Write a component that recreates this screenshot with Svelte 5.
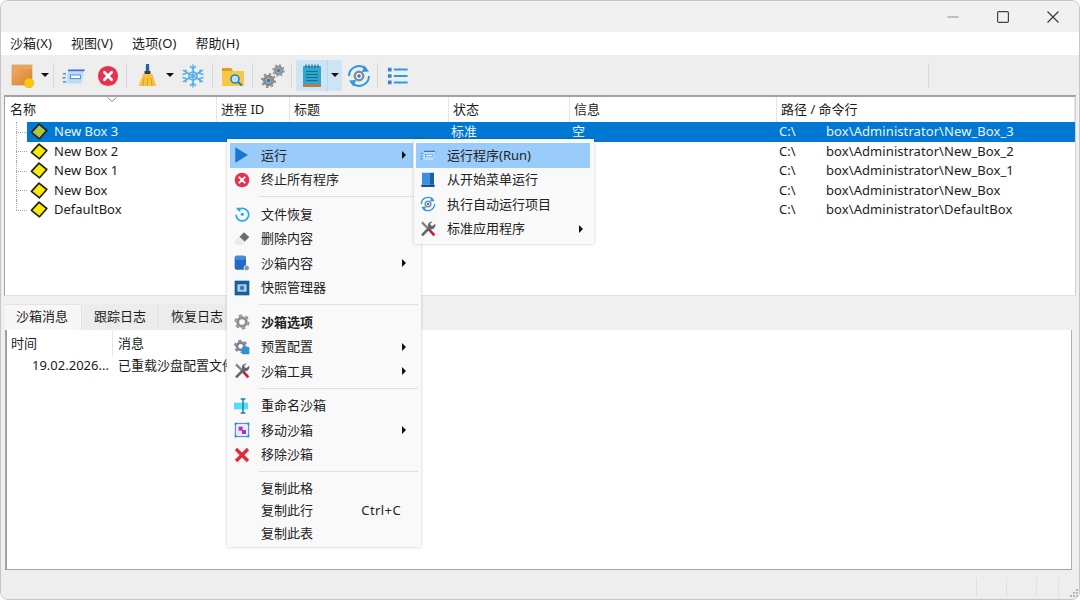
<script lang="ts">
  const menus = ['沙箱(X)', '视图(V)', '选项(O)', '帮助(H)'];
  const columns = ['名称', '进程 ID', '标题', '状态', '信息', '路径 / 命令行'];
  const boxes = [
    { name: 'New Box 3', state: '标准', info: '空', path: 'box\\Administrator\\New_Box_3', active: true },
    { name: 'New Box 2', state: '', info: '', path: 'box\\Administrator\\New_Box_2', active: false },
    { name: 'New Box 1', state: '', info: '', path: 'box\\Administrator\\New_Box_1', active: false },
    { name: 'New Box', state: '', info: '', path: 'box\\Administrator\\New_Box', active: false },
    { name: 'DefaultBox', state: '', info: '', path: 'box\\Administrator\\DefaultBox', active: false }
  ];
  const tabs = ['沙箱消息', '跟踪日志', '恢复日志'];
  type Item = { label?: string; icon?: string; sub?: boolean; on?: boolean; bold?: boolean; key?: string; sep?: boolean; small?: boolean };
  const mainMenu: Item[] = [
    { label: '运行', icon: 'play', sub: true, on: true },
    { label: '终止所有程序', icon: 'stop' },
    { sep: true },
    { label: '文件恢复', icon: 'restore' },
    { label: '删除内容', icon: 'eraser' },
    { label: '沙箱内容', icon: 'content', sub: true },
    { label: '快照管理器', icon: 'snapshot' },
    { sep: true },
    { label: '沙箱选项', icon: 'gear', bold: true },
    { label: '预置配置', icon: 'preset', sub: true },
    { label: '沙箱工具', icon: 'tools', sub: true },
    { sep: true },
    { label: '重命名沙箱', icon: 'rename' },
    { label: '移动沙箱', icon: 'move', sub: true },
    { label: '移除沙箱', icon: 'remove' },
    { sep: true },
    { label: '复制此格', small: true },
    { label: '复制此行', key: 'Ctrl+C', small: true },
    { label: '复制此表', small: true }
  ];
  const runMenu: Item[] = [
    { label: '运行程序(Run)', icon: 'run', on: true },
    { label: '从开始菜单运行', icon: 'book' },
    { label: '执行自动运行项目', icon: 'auto' },
    { label: '标准应用程序', icon: 'tools', sub: true }
  ];
</script>

{#snippet icon(name: string, size: number)}
  <svg class="ico" width={size} height={size} viewBox="0 0 24 24" aria-hidden="true">
    {#if name === 'box'}
      <rect x="1" y="1" width="20" height="20" fill="url(#orange)" stroke="#d08a3c" stroke-width=".6" />
      <rect x="1" y="1" width="20" height="4" fill="#e9a45c" />
      <circle cx="18" cy="19" r="4.8" fill="#fdc80c" stroke="#eea806" stroke-width=".6" />
    {:else if name === 'run'}
      <path d="M6 5.5h17l-1 2H6z" fill="#3f6fc4" />
      <path d="M6 7.500h16l-2.400 12H4.500z" fill="#bcdcf8" />
      <rect x="8.400" y="11" width="10" height="3.600" fill="#fff" stroke="#3a94e0" stroke-width="1" />
      <path d="M1 9h3v1.600H1zM.5 13h3v1.600h-3zM1 17h3v1.600H1z" fill="#3a94e0" />
    {:else if name === 'stop'}
      <circle cx="12" cy="12" r="11" fill="#e8314f" />
      <path d="M8 8l8 8M16 8l-8 8" stroke="#fff" stroke-width="3" stroke-linecap="round" />
    {:else if name === 'broom'}
      <path d="M11 0h3l.3 8h-3.600z" fill="#1f5fb0" />
      <rect x="9.500" y="7" width="6" height="3" fill="#3a3f4a" />
      <path d="M8 10h9.600l3.600 12H3.600z" fill="#f7c341" />
      <path d="M8 22l1-8M12.500 22v-8M17 22l-1-8" stroke="#d89a20" stroke-width=".9" />
    {:else if name === 'snow'}
      <g stroke="#55aeea" stroke-width="1.500" fill="none">
        <path d="M12 .5v23M2 6.200l20 11.600M22 6.200L2 17.800" />
        <path d="M9 2l3 3 3-3M9 22l3-3 3 3M1.500 10.500l4-1-1-4M22.500 13.500l-4 1 1 4M22.500 10.500l-4-1 1-4M1.500 13.500l4 1-1 4" />
        <path d="M12 7.500l4 2.200v4.600L12 16.500l-4-2.200V9.700z" />
      </g>
    {:else if name === 'folder'}
      <path d="M1 4h9l2 3h11v15H1z" fill="#f8c93f" />
      <path d="M1 4h9l2 3H1z" fill="#d99f1d" />
      <circle cx="14" cy="15" r="4" fill="#bfe2fb" stroke="#1d86d6" stroke-width="1.600" />
      <path d="M17 18l4 3.500" stroke="#1d86d6" stroke-width="2.200" />
    {:else if name === 'gears'}
      <circle cx="7.500" cy="16.500" r="4" fill="#fff" stroke="#8b8b8b" stroke-width="3.400" />
      <circle cx="7.500" cy="16.500" r="2" fill="#2b78c8" />
      <circle cx="7.500" cy="16.500" r="6.600" fill="none" stroke="#8b8b8b" stroke-width="1.800" stroke-dasharray="2.400 2.800" />
      <circle cx="17.500" cy="6.500" r="3.400" fill="#fff" stroke="#959595" stroke-width="3" />
      <circle cx="17.500" cy="6.500" r="1.700" fill="#2b78c8" />
      <circle cx="17.500" cy="6.500" r="5.500" fill="none" stroke="#959595" stroke-width="1.500" stroke-dasharray="2 2.300" />
    {:else if name === 'notebook'}
      <rect x="3" y="2" width="18" height="21" rx="1" fill="#2fa6cc" />
      <rect x="3" y="20" width="18" height="3" fill="#b9794f" />
      <path d="M6 7.500h12M6 10.500h12M6 13.500h12M6 16.500h12" stroke="#1a6d88" stroke-width="1.200" />
      <path d="M6 .5v3M9 .5v3M12 .5v3M15 .5v3M18 .5v3" stroke="#1d5f8a" stroke-width="1.200" />
    {:else if name === 'auto'}
      <path d="M2 12a10 10 0 0 1 17-7M22 12a10 10 0 0 1-17 7" fill="none" stroke="#2e98e2" stroke-width="2" />
      <path d="M17.500 1.500l4.500 6-7.200.6zM6.500 22.500L2 16.500l7.200-.6z" fill="#2e98e2" />
      <circle cx="12" cy="12" r="4.200" fill="#fff" stroke="#7c8ea0" stroke-width="2.400" />
      <circle cx="12" cy="12" r="1.800" fill="#2b78c8" />
    {:else if name === 'list'}
      <path d="M1 3h4v4H1zM1 10h4v4H1zM1 17h4v4H1z" fill="#3a7fd0" />
      <path d="M7.500 5h15M7.500 12h15M7.500 19h15" stroke="#2e98e2" stroke-width="2.200" />
    {:else if name === 'play'}
      <path d="M2 0.500L21 12 2 23.500z" fill="#1878d0" />
    {:else if name === 'restore'}
      <path d="M5.500 6.500A9.500 9.500 0 1 1 3 13" fill="none" stroke="#2fa8ec" stroke-width="2.600" />
      <path d="M2.500 2.500h7v7z" fill="#2fa8ec" />
      <circle cx="12.500" cy="12.500" r="2.400" fill="#2fa8ec" />
    {:else if name === 'eraser'}
      <path d="M15 2l8 7-7 7-8-7z" fill="#6d6d6d" />
      <path d="M8 9l8 7-4 4H5l-4-4z" fill="#ececec" stroke="#cfcfcf" stroke-width=".6" />
    {:else if name === 'content'}
      <rect x="1" y="1" width="17" height="21" rx="3" fill="#2467c4" />
      <rect x="1" y="1" width="17" height="6" rx="3" fill="#3f8ee0" />
      <circle cx="19" cy="19.500" r="4" fill="#7f95ab" stroke="#fff" stroke-width="1" />
    {:else if name === 'snapshot'}
      <rect x="1" y="1" width="22" height="22" fill="#175f9c" />
      <rect x="5" y="6.500" width="14" height="11" rx="1" fill="#a8cbe8" />
      <circle cx="12" cy="12" r="3.200" fill="#2d7ab8" />
    {:else if name === 'gear'}
      <circle cx="12" cy="12" r="6.500" fill="none" stroke="#8f8f8f" stroke-width="4.400" />
      <circle cx="12" cy="12" r="10" fill="none" stroke="#8f8f8f" stroke-width="2.600" stroke-dasharray="5.200 5.270" />
    {:else if name === 'preset'}
      <circle cx="10" cy="11" r="5.500" fill="none" stroke="#77838f" stroke-width="4" />
      <circle cx="10" cy="11" r="8.800" fill="none" stroke="#77838f" stroke-width="2.400" stroke-dasharray="4.600 4.600" />
      <rect x="12" y="12" width="11" height="11" rx="1" fill="#2d8fd8" />
    {:else if name === 'tools'}
      <path d="M3 2l10 10" stroke="#808080" stroke-width="3.400" />
      <path d="M12.500 11.500l9 10" stroke="#c8202f" stroke-width="4" />
      <path d="M3 21.500L14.500 10" stroke="#5f6670" stroke-width="4" />
      <path d="M22.500 4l-3.700 3.600-2.600-.8-.8-2.600L19 .8a6 6 0 0 0-6.500 8.500L15 12a6 6 0 0 0 7.500-8z" fill="#5f6670" />
    {:else if name === 'rename'}
      <rect x="0" y="7" width="21" height="10" fill="#54dcfa" />
      <path d="M10 1.500h7M10 22.500h7M13.500 1.500v21" stroke="#1f7ea5" stroke-width="2.200" fill="none" />
    {:else if name === 'move'}
      <rect x="2" y="2" width="20" height="20" fill="#ece6f5" stroke="#2f80dc" stroke-width="1.400" />
      <path d="M1 1h3v3H1zM20 1h3v3h-3zM1 20h3v3H1zM20 20h3v3h-3z" fill="#2f80dc" />
      <rect x="7" y="7" width="6" height="6" fill="#c02bc0" />
      <rect x="12" y="12" width="6" height="6" fill="#8a3fd0" />
    {:else if name === 'remove'}
      <path d="M3 3l18 18M21 3L3 21" stroke="#e22a3c" stroke-width="5" />
    {:else if name === 'book'}
      <path d="M3 1h12v18H3z" fill="#3f8fdc" />
      <path d="M15 1h6v18h-6z" fill="#1b5fae" />
      <path d="M2 19h20v3.500H2z" fill="#174f90" />
    {/if}
  </svg>
{/snippet}

{#snippet menuList(items: Item[])}
  {#each items as item}
    {#if item.sep}
      <div class="sep"></div>
    {:else}
      <div class="item" class:on={item.on} class:small={item.small} class:bold={item.bold}>
        <span class="item-icon">{#if item.icon}{@render icon(item.icon, 16)}{/if}</span>
        <span class="item-label">{item.label}</span>
        {#if item.key}<span class="item-key">{item.key}</span>{/if}
        {#if item.sub}<span class="arrow-right"></span>{/if}
      </div>
    {/if}
  {/each}
{/snippet}

<svg class="defs" width="0" height="0" aria-hidden="true">
  <defs>
    <linearGradient id="orange" x1="0" y1="0" x2="1" y2="1">
      <stop offset="0" stop-color="#f0b068" />
      <stop offset="1" stop-color="#dc7f2c" />
    </linearGradient>
  </defs>
</svg>

<div class="window">
  <header class="titlebar">
    <button class="cap" aria-label="最小化"><svg width="12" height="12" viewBox="0 0 12 12"><path d="M0.500 6h11" stroke="#8d8d8d" stroke-width="1.100" /></svg></button>
    <button class="cap" aria-label="最大化"><svg width="12" height="12" viewBox="0 0 12 12"><rect x=".6" y=".6" width="10.800" height="10.800" rx="1.200" fill="none" stroke="#444" stroke-width="1.200" /></svg></button>
    <button class="cap" aria-label="关闭"><svg width="12" height="12" viewBox="0 0 12 12"><path d="M.5.5l11 11M11.500.5l-11 11" stroke="#333" stroke-width="1.100" /></svg></button>
  </header>

  <nav class="menubar">
    {#each menus as m}<span>{m}</span>{/each}
  </nav>

  <div class="toolbar">
    <span class="tool">{@render icon('box', 24)}</span>
    <span class="drop"></span>
    <span class="tsep tight"></span>
    <span class="tool">{@render icon('run', 24)}</span>
    <span class="tool stop">{@render icon('stop', 22)}</span>
    <span class="tsep"></span>
    <span class="tool">{@render icon('broom', 24)}</span>
    <span class="drop wide"></span>
    <span class="tool snow pad">{@render icon('snow', 24)}</span>
    <span class="tsep"></span>
    <span class="tool pad">{@render icon('folder', 24)}</span>
    <span class="tsep"></span>
    <span class="tool">{@render icon('gears', 24)}</span>
    <span class="tsep before-toggle"></span>
    <span class="toggled">
      <span class="tool">{@render icon('notebook', 24)}</span>
      <span class="drop"></span>
    </span>
    <span class="tool">{@render icon('auto', 24)}</span>
    <span class="tsep"></span>
    <span class="tool">{@render icon('list', 22)}</span>
    <span class="tsep far"></span>
  </div>

  <section class="tree">
    <div class="tree-head">
      {#each columns as c}<div class="th">{c}</div>{/each}
      <svg class="sort" width="10" height="5" viewBox="0 0 10 5"><path d="M.5.500L5 4.500 9.500.500" fill="none" stroke="#808080" /></svg>
    </div>
    <div class="tree-body">
      {#each boxes as b, i}
        <div class="row" class:selected={b.active} class:last={i === boxes.length - 1}>
          <div class="name">
            <svg class="diamond" width="18" height="17" viewBox="0 0 18 17">
              <path d="M9 1.200L16.800 7.500 9.500 15.800 1.400 9.300z" fill={b.active ? '#a9c93f' : '#f9ec00'} stroke="#222" stroke-width="1.700" stroke-linejoin="round" />
            </svg>
            {b.name}
          </div>
          <div></div>
          <div></div>
          <div>{b.state}</div>
          <div>{b.info}</div>
          <div class="path"><span class="drive">C:\</span>{b.path}</div>
        </div>
      {/each}
    </div>
  </section>

  <div class="tabs">
    {#each tabs as t, i}<div class="tab" class:active={i === 0}>{t}</div>{/each}
  </div>

  <section class="log">
    <div class="log-row log-head"><div>时间</div><div>消息</div></div>
    <div class="log-row"><div class="stamp">19.02.2026...</div><div>已重载沙盘配置文件</div></div>
  </section>

  <footer class="statusbar">
    <span></span><span></span><span></span><span></span>
    <svg class="grip" width="10" height="10" viewBox="0 0 10 10"><path d="M7 0h2v2H7zM4 3h2v2H4zM7 3h2v2H7zM1 6h2v2H1zM4 6h2v2H4zM7 6h2v2H7z" fill="#b5b5b5" /></svg>
  </footer>

  <div class="menu main">{@render menuList(mainMenu)}</div>
  <div class="menu run">{@render menuList(runMenu)}</div>
</div>

<style>
  :global(body) {
    margin: 0;
    background: #fff;
  }

  .defs {
    position: absolute;
  }

  .window {
    position: relative;
    box-sizing: border-box;
    width: 1080px;
    height: 600px;
    display: flex;
    flex-direction: column;
    overflow: hidden;
    background: #f0f0f0;
    border: 1px solid #c6c6c6;
    border-radius: 8px;
    font-family: "Noto Sans", "Noto Sans CJK SC", sans-serif;
    font-size: 13px;
    color: #1c1c1c;
  }

  .titlebar {
    height: 31px;
    display: flex;
    justify-content: flex-end;
    flex-shrink: 0;
    background: #f1f1f1;
    padding-right: 1px;
  }

  .cap {
    width: 50px;
    padding: 0;
    border: none;
    background: none;
    display: flex;
    align-items: center;
    justify-content: center;
  }

  .menubar {
    height: 23px;
    flex-shrink: 0;
    display: flex;
    align-items: center;
    gap: 19px;
    padding-left: 9px;
    background: #fff;
    line-height: 23px;
    letter-spacing: 0.1px;
  }

  .toolbar {
    height: 40px;
    flex-shrink: 0;
    display: flex;
    align-items: center;
    padding-left: 9px;
    background: #eeeeee;
  }

  .tool {
    display: flex;
    align-items: center;
    justify-content: center;
    width: 26px;
    height: 31px;
    padding-top: 2px;
    box-sizing: border-box;
  }

  .stop {
    margin-left: 8px;
  }

  .snow {
    margin-left: 6px;
  }

  .pad {
    margin-right: 1px;
  }

  .ico {
    display: block;
    flex-shrink: 0;
  }

  .drop {
    width: 0;
    height: 0;
    margin-left: 5px;
    border-left: 4px solid transparent;
    border-right: 4px solid transparent;
    border-top: 4px solid #111;
  }

  .drop.wide {
    margin-left: 6px;
  }

  .tsep {
    width: 1px;
    height: 25px;
    margin: 0 7px 0 5px;
    background: #d8d8d8;
  }

  .tsep.tight {
    margin-left: 4px;
  }

  .tsep.before-toggle {
    margin-right: 4px;
  }

  .tsep.far {
    margin-left: 517px;
  }

  .toggled {
    display: flex;
    align-items: center;
    height: 31px;
    width: 46px;
    margin-right: 4px;
    background: #cde4f4;
    border-radius: 2px;
  }

  .toggled .tool {
    width: 32px;
    border-right: 1px solid #b9d8ee;
  }

  .toggled .drop {
    margin-left: 3px;
  }

  .tree {
    height: 198px;
    flex-shrink: 0;
    margin: 0 3px;
    background: #fff;
    border-top: 2px solid #a2a2a2;
    border-left: 1px solid #a2a2a2;
    border-right: 1px solid #d0d0d0;
    border-bottom: 1px solid #e2e2e2;
  }

  .tree-head {
    position: relative;
    display: grid;
    grid-template-columns: 212px 73px 159px 121px 207px 1fr;
    height: 25px;
  }

  .th {
    padding-left: 4px;
    line-height: 24px;
    border-right: 1px solid #e5e5e5;
  }

  .th:first-of-type {
    padding-left: 5px;
  }

  .sort {
    position: absolute;
    left: 102px;
    top: 0;
  }

  .row {
    position: relative;
    display: grid;
    grid-template-columns: 189px 73px 159px 121px 207px 1fr;
    height: 19.5px;
    line-height: 19.5px;
    margin-left: 22px;
  }

  .row > div {
    padding-left: 3px;
    white-space: nowrap;
  }

  .row::before {
    content: "";
    position: absolute;
    left: -11px;
    top: 0;
    bottom: 0;
    border-left: 1px dotted #a8a8a8;
  }

  .row.last::before {
    bottom: 50%;
  }

  .row::after {
    content: "";
    position: absolute;
    left: -11px;
    width: 11px;
    top: 50%;
    border-top: 1px dotted #a8a8a8;
  }

  .row.selected {
    background: #0078d4;
    color: #eaf4fc;
  }

  .row .name {
    display: flex;
    align-items: center;
    gap: 6px;
  }

  .diamond {
    flex-shrink: 0;
  }

  .row .path {
    letter-spacing: 0.08px;
  }

  .drive {
    display: inline-block;
    width: 47px;
    letter-spacing: 0;
  }

  .tabs {
    display: flex;
    height: 26px;
    margin-top: 8px;
    padding-left: 4px;
    flex-shrink: 0;
    gap: 1px;
  }

  .tab {
    padding: 0 12px 0 11px;
    line-height: 25px;
    background: #ececec;
    border-right: 1px solid #e2e2e2;
  }

  .tab.active {
    width: 54px;
    padding: 0 11px 0 11px;
    background: #f7f7f7;
    border-top: 1px solid #e4e4e4;
    line-height: 23px;
  }

  .log {
    flex: 0 0 240px;
    box-sizing: border-box;
    margin: 0 7px 0 4px;
    background: #fff;
    border-left: 2px solid #a2a2a2;
    border-right: 1px solid #b0b0b0;
    border-bottom: 1px solid #a2a2a2;
  }

  .log-row {
    display: grid;
    grid-template-columns: 106px 1fr;
    height: 22px;
    line-height: 22px;
  }

  .log-row > div {
    padding-left: 5px;
    white-space: nowrap;
  }

  .log-head {
    height: 24px;
    line-height: 26px;
  }

  .log-head > div:first-child {
    padding-left: 4px;
    border-right: 1px solid #e8e8e8;
  }

  .log-row .stamp {
    padding-left: 25px;
  }

  .statusbar {
    position: relative;
    flex: 1;
    display: flex;
    justify-content: flex-end;
    align-items: flex-end;
    padding: 0 20px 2px 0;
    gap: 29px;
    background: #eeeeee;
  }

  .statusbar span {
    width: 1px;
    height: 19px;
    background: #e0e0e0;
  }

  .statusbar span:nth-child(4) {
    margin-left: -8px;
  }

  .grip {
    position: absolute;
    right: 0;
    bottom: 0;
  }

  .menu {
    position: absolute;
    box-sizing: border-box;
    display: flex;
    flex-direction: column;
    padding: 4px 3px;
    background: #f9f9f9;
    box-shadow: 0 0 3px rgba(0, 0, 0, 0.22);
  }

  .menu.main {
    left: 226px;
    top: 138px;
    width: 194px;
    height: 408px;
    padding-right: 8px;
  }

  .menu.run {
    left: 413px;
    top: 138px;
    width: 180px;
    height: 105px;
    padding: 4px 4px 4px 2px;
  }

  .item {
    display: flex;
    align-items: center;
    position: relative;
    height: 24.5px;
    flex-shrink: 0;
    white-space: nowrap;
    color: #222;
  }

  .item.small {
    height: 22.5px;
  }

  .item.on {
    background: #99ccfb;
  }

  .item.bold .item-label {
    font-weight: 700;
  }

  .item-label {
    padding-bottom: 2px;
  }

  .item-icon {
    box-sizing: border-box;
    width: 31px;
    display: flex;
    padding-left: 4px;
    flex-shrink: 0;
  }

  .item-key {
    position: absolute;
    right: 12px;
    padding-bottom: 2px;
    letter-spacing: 0.4px;
  }

  .arrow-right {
    position: absolute;
    right: 7px;
    top: 50%;
    margin-top: -4px;
    width: 0;
    height: 0;
    border-top: 4px solid transparent;
    border-bottom: 4px solid transparent;
    border-left: 4px solid #111;
  }

  .sep {
    height: 10px;
    flex-shrink: 0;
    position: relative;
  }

  .sep::after {
    content: "";
    position: absolute;
    left: 29px;
    right: -5px;
    top: 4px;
    height: 1px;
    background: #e0e0e0;
  }
</style>
